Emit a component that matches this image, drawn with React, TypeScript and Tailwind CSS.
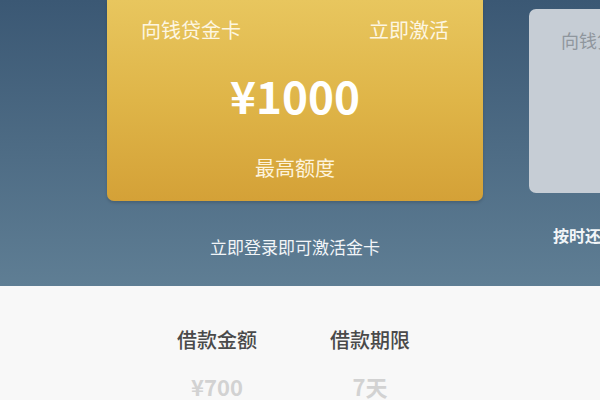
const font = { fontFamily: '"Noto Sans CJK SC", "Noto Sans", sans-serif' }

export default function App() {
  return (
    <div className="w-[600px] h-[400px] overflow-hidden bg-[#f8f8f8]" style={font}>
      <div className="h-[286px] bg-gradient-to-b from-[#3b5874] to-[#5f7e94] flex gap-[46px] pl-[107px] overflow-hidden">
        <div className="w-[376px] shrink-0 flex flex-col items-center">
          <div className="w-full h-[201px] rounded-b-[7px] bg-gradient-to-b from-[#e8c65e] via-[#dfb548] to-[#d4a137] shadow-[0_2px_3px_rgba(0,0,0,0.15)] flex flex-col px-[34px]">
            <div className="flex justify-between items-center pt-[16px] text-[20px] leading-[28px] text-[#fdf6e2]">
              <span>向钱贷金卡</span>
              <span>立即激活</span>
            </div>
            <div className="mt-[26px] text-center text-[44px] leading-[50px] font-bold text-white">¥1000</div>
            <div className="mt-[34px] text-center text-[20px] leading-[28px] text-[#fdf3dc]">最高额度</div>
          </div>
          <div className="mt-[34px] text-[17px] leading-[24px] text-[#f2f5f8]">立即登录即可激活金卡</div>
        </div>
        <div className="w-[376px] shrink-0 flex flex-col">
          <div className="mt-[9px] h-[184px] rounded-[7px] bg-[#c6cdd5] pl-[32px] pt-[18px] text-[18px] leading-[26px] text-[#8f969d]">
            向钱贷金卡
          </div>
          <div className="mt-[30px] pl-[24px] text-[16px] leading-[24px] font-bold text-[#f2f5f8]">按时还款提升额度</div>
        </div>
      </div>
      <div className="flex pl-[167px] gap-[53px] pt-[40px]">
        <div className="flex flex-col items-center w-[100px]">
          <div className="text-[20px] leading-[28px] font-medium text-[#4a4a4a]">借款金额</div>
          <div className="mt-[18px] text-[22px] leading-[28px] font-bold text-[#d2d2d2]">¥700</div>
        </div>
        <div className="flex flex-col items-center w-[100px]">
          <div className="text-[20px] leading-[28px] font-medium text-[#4a4a4a]">借款期限</div>
          <div className="mt-[18px] text-[22px] leading-[28px] font-bold text-[#d2d2d2]">7天</div>
        </div>
      </div>
    </div>
  )
}
